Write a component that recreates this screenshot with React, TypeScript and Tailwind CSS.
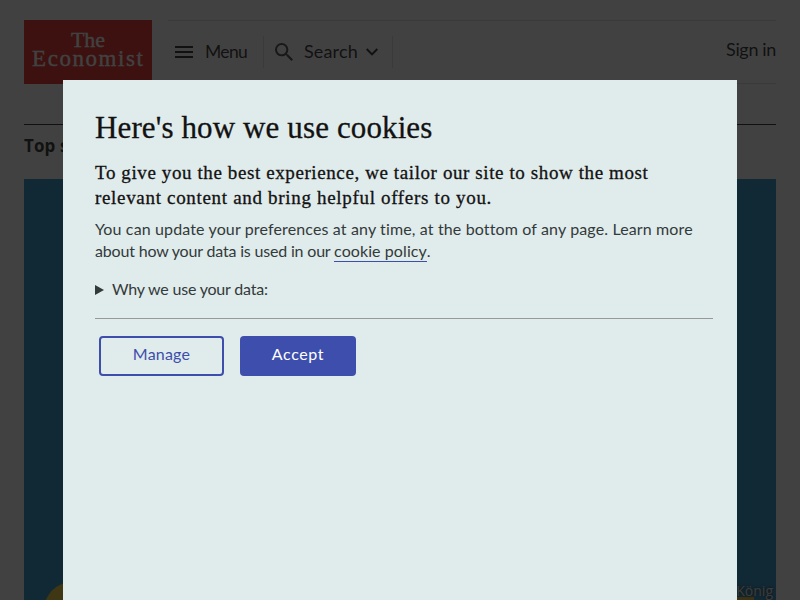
import React from "react";

const sans = "font-['Lato','Open_Sans',sans-serif]";
const serif = "font-['Liberation_Serif',serif]";

function Logo() {
  return (
    <div className={`flex h-16 w-32 flex-col items-center bg-[#e3120b] pt-[11px] text-white [-webkit-text-stroke:0.3px_white] ${serif}`}>
      <span className="text-[22px] leading-[18px]">The</span>
      <span className="mt-px mr-[-0.5px] text-[23px] leading-[18px] tracking-[1.55px] whitespace-nowrap">Economist</span>
    </div>
  );
}

function Header() {
  return (
    <header className="flex h-16 gap-4">
      <Logo />
      <div className="flex flex-1 items-center border-y border-[#d9d9d9] text-[18px] text-[#121212]">
        <div className="flex h-8 w-24 items-center border-r border-[#d9d9d9] pl-[7px]">
          <svg width="18" height="12" viewBox="0 0 18 12" fill="#121212">
            <path d="M0 0h18v2H0zM0 5h18v2H0zM0 10h18v2H0z" />
          </svg>
          <span className="mb-px ml-3 text-[17.5px] leading-6 tracking-[-0.65px]">Menu</span>
        </div>
        <div className="flex h-8 w-[129px] items-center border-r border-[#d9d9d9] pl-[11px]">
          <svg className="mb-px" width="18" height="18" viewBox="3 3 17.5 17.5" fill="#333">
            <path d="M15.5 14h-.79l-.28-.27A6.47 6.47 0 0 0 16 9.5 6.5 6.5 0 1 0 9.5 16c1.61 0 3.09-.59 4.23-1.57l.27.28v.79l5 4.99L20.49 19l-4.99-5zm-6 0C7.01 14 5 11.99 5 9.5S7.01 5 9.5 5 14 7.01 14 9.5 11.99 14 9.5 14z" />
          </svg>
          <span className="mb-0.5 ml-[11px] w-[54px] leading-6 tracking-[0.15px]">Search</span>
          <svg className="ml-2" width="12" height="8" viewBox="6 8.59 12 7.41" fill="#121212">
            <path d="M16.59 8.59 12 13.17 7.41 8.59 6 10l6 6 6-6z" />
          </svg>
        </div>
        <span className="mb-1.5 ml-auto leading-6 tracking-[-0.35px]">Sign in</span>
      </div>
    </header>
  );
}

function CookieDialog() {
  return (
    <section className={`absolute top-20 left-[63px] h-[520px] w-[674px] bg-[#e0ebeb] pr-6 pl-8 text-[#333a3a] [font-variant-ligatures:none] ${sans}`}>
      <h1 className={`pt-8 text-[31px] leading-8 tracking-[0.12px] whitespace-nowrap text-[#121212] [-webkit-text-stroke:0.3px_#121212] ${serif}`}>
        Here's how we use cookies
      </h1>
      <p className={`mt-4 text-[19px] leading-[25px] whitespace-nowrap text-[#121212] [-webkit-text-stroke:0.3px_#121212] ${serif}`}>
        <span className="block tracking-[0.6px]">To give you the best experience, we tailor our site to show the most</span>
        <span className="block tracking-[0.68px]">relevant content and bring helpful offers to you.</span>
      </p>
      <p className="mt-2 text-[16px] leading-[22px] whitespace-nowrap">
        <span className="block tracking-[0.135px]">You can update your preferences at any time, at the bottom of any page. Learn more</span>
        <span className="block tracking-[-0.18px]">
          about how your data is used in our <a className="border-b border-[#3d4eac] pb-px tracking-[0.08px]">cookie policy</a>.
        </span>
      </p>
      <div className="mt-4 flex h-6 items-center gap-2 text-[16px] leading-6">
        <svg width="9" height="10" viewBox="0 0 9 10" fill="#333a3a"><path d="M0 0 9 5 0 10z" /></svg>
        <span className="mb-0.5 tracking-[-0.2px]">Why we use your data:</span>
      </div>
      <hr className="mt-4 border-[#979999]" />
      <div className="mt-[17px] ml-1 flex gap-4 text-[16px]">
        <button className="h-10 w-[125px] rounded border-2 border-[#3d4eac] pb-1 tracking-[0.2px] text-[#3d4eac]">Manage</button>
        <button className="h-10 w-[116px] rounded bg-[#3d4eac] pb-1 tracking-[0.6px] text-white">Accept</button>
      </div>
    </section>
  );
}

export default function App() {
  return (
    <div className={`relative h-[600px] w-[800px] overflow-hidden bg-white ${sans}`}>
      <div className="flex h-full flex-col px-6 pt-5">
        <Header />
        <main className="mt-10 flex flex-1 flex-col border-t border-[#121212]">
          <h2 className="mt-[9px] w-12 overflow-hidden font-['Open_Sans',sans-serif] text-[17px] leading-6 font-bold tracking-[0.1px] whitespace-nowrap text-[#121212]">Top s</h2>
          <div className="relative mt-[21px] flex-1 overflow-hidden bg-[#1185c0]">
            <div className="absolute top-[403px] left-5 h-20 w-14 rounded-t-full bg-[#f5c81a]" />
            <div className="absolute top-[418px] right-[22px] h-4 w-10 bg-[#e8b81a]" />
            <span className="absolute right-[3px] bottom-0 font-['Open_Sans',sans-serif] text-[14px] leading-[19px] text-[#e0e0e0] [text-shadow:0_0_3px_#000]">König</span>
          </div>
        </main>
      </div>
      <div className="absolute inset-0 bg-[#121212]/80" />
      <CookieDialog />
    </div>
  );
}
